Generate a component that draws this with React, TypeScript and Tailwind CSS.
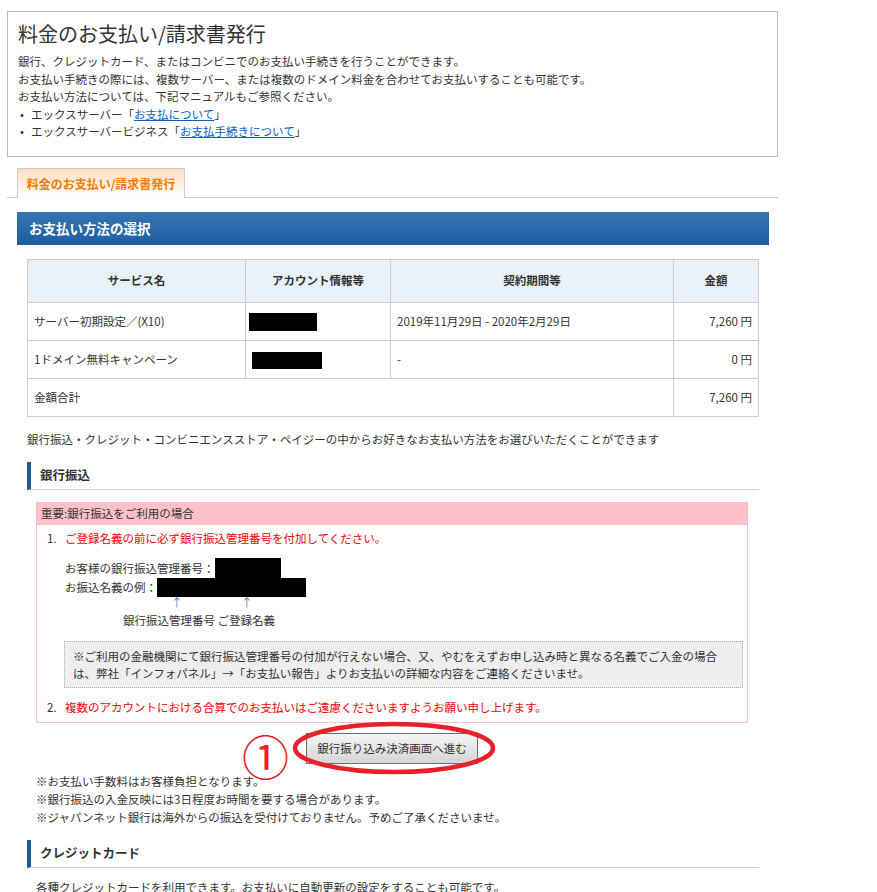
import React from "react";

const font = { fontFamily: '"Noto Sans CJK JP", "Noto Sans", sans-serif' };

function Redact({ w, h }: { w: number; h: number }) {
  return <span className="inline-block bg-black align-middle" style={{ width: w, height: h }} />;
}

function SectionHeading({ children }: { children: React.ReactNode }) {
  return (
    <div className="flex h-[28px] items-center border-b border-[#d0d0d0] border-l-[4px] border-l-[#1e5a9e] pl-[9px] text-[12.5px] font-bold text-[#333]">
      {children}
    </div>
  );
}

export default function App() {
  return (
    <div style={font} className="w-[877px] bg-white pt-[11px] pl-[7px] text-[#333]">
      {/* top box */}
      <div className="h-[146px] w-[771px] border border-[#bbb] pl-[10px] pt-[10px]">
        <h1 className="text-[20px] leading-[24px] text-[#333]">料金のお支払い/請求書発行</h1>
        <div className="mt-[7px] text-[11.5px] leading-[17.5px]">
          <p>銀行、クレジットカード、またはコンビニでのお支払い手続きを行うことができます。</p>
          <p>お支払い手続きの際には、複数サーバー、または複数のドメイン料金を合わせてお支払いすることも可能です。</p>
          <p>お支払い方法については、下記マニュアルもご参照ください。</p>
          <ul>
            <li className="flex">
              <span className="w-[13px] pl-[2px]">•</span>
              <span>
                エックスサーバー「<a className="text-[#0b5fc4] underline">お支払について</a>」
              </span>
            </li>
            <li className="flex">
              <span className="w-[13px] pl-[2px]">•</span>
              <span>
                エックスサーバービジネス「<a className="text-[#0b5fc4] underline">お支払手続きについて</a>」
              </span>
            </li>
          </ul>
        </div>
      </div>

      {/* tab strip */}
      <div className="mt-[11px] flex w-[771px] border-b border-[#ccc] pl-[10px]">
        <div className="-mb-px flex h-[30px] w-[168px] items-center justify-center border border-b-0 border-[#ccc] bg-gradient-to-b from-[#fddcc0] to-white text-[12px] font-bold text-[#f47c00]">
          料金のお支払い/請求書発行
        </div>
      </div>

      <div className="pl-[10px]">
        {/* blue header */}
        <div className="mt-[14px] flex h-[33px] w-[752px] items-center bg-gradient-to-b from-[#3876b0] to-[#1c5ea3] pl-[12px] text-[13.5px] font-bold text-white">
          お支払い方法の選択
        </div>

        <div className="pl-[10px]">
          {/* table */}
          <table className="mt-[14px] w-[731px] table-fixed border-collapse text-[11.5px]">
            <colgroup>
              <col style={{ width: 218 }} />
              <col style={{ width: 145 }} />
              <col style={{ width: 283 }} />
              <col style={{ width: 85 }} />
            </colgroup>
            <thead>
              <tr className="h-[43px] bg-[#e8f0f8]">
                <th className="border border-[#ccc] font-bold">サービス名</th>
                <th className="border border-[#ccc] font-bold">アカウント情報等</th>
                <th className="border border-[#ccc] font-bold">契約期間等</th>
                <th className="border border-[#ccc] font-bold">金額</th>
              </tr>
            </thead>
            <tbody>
              <tr className="h-[38px]">
                <td className="border border-[#ccc] pl-[6px]">サーバー初期設定／(X10)</td>
                <td className="border border-[#ccc] pl-[3px]">
                  <Redact w={68} h={18} />
                </td>
                <td className="border border-[#ccc] pl-[6px]">2019年11月29日 - 2020年2月29日</td>
                <td className="border border-[#ccc] pr-[6px] text-right">7,260 円</td>
              </tr>
              <tr className="h-[38px]">
                <td className="border border-[#ccc] pl-[6px]">1ドメイン無料キャンペーン</td>
                <td className="border border-[#ccc] pl-[6px]">
                  <Redact w={70} h={17} />
                </td>
                <td className="border border-[#ccc] pl-[6px]">-</td>
                <td className="border border-[#ccc] pr-[6px] text-right">0 円</td>
              </tr>
              <tr className="h-[38px]">
                <td colSpan={3} className="border border-[#ccc] pl-[6px]">金額合計</td>
                <td className="border border-[#ccc] pr-[6px] text-right">7,260 円</td>
              </tr>
            </tbody>
          </table>

          <p className="mt-[13px] text-[11.5px] leading-[18px]">
            銀行振込・クレジット・コンビニエンスストア・ペイジーの中からお好きなお支払い方法をお選びいただくことができます
          </p>

          {/* bank transfer */}
          <div className="mt-[14px] w-[732px]">
            <SectionHeading>銀行振込</SectionHeading>
          </div>

          <div className="ml-[9px] mt-[12px] w-[712px] border border-[#ffc0cb] text-[11.5px]">
            <div className="flex h-[22px] items-center bg-[#ffc0cb] pl-[4px]">重要:銀行振込をご利用の場合</div>
            <div className="pb-[6px] pl-[10px] pt-[4px] pr-[4px]">
              <div className="flex leading-[18px]">
                <span className="w-[18px]">1.</span>
                <span className="text-[#ff0000]">ご登録名義の前に必ず銀行振込管理番号を付加してください。</span>
              </div>
              <div className="mt-[11px] pl-[18px] leading-[19px]">
                <div className="flex items-center">
                  <span>お客様の銀行振込管理番号：</span>
                  <Redact w={66} h={20} />
                </div>
                <div className="flex items-center">
                  <span>お振込名義の例：</span>
                  <Redact w={149} h={19} />
                </div>
                <div className="relative h-[14px] text-[#5a82c0]">
                  <span className="absolute left-[106px] top-[-4px]">↑</span>
                  <span className="absolute left-[176px] top-[-4px]">↑</span>
                </div>
                <div className="pl-[58px] leading-[18px]">銀行振込管理番号 ご登録名義</div>
              </div>
              <div className="ml-[17px] mt-[12px] border border-dotted border-[#aaa] bg-[#eeeeee] px-[8px] py-[6px] leading-[16.5px]">
                ※ご利用の金融機関にて銀行振込管理番号の付加が行えない場合、又、やむをえずお申し込み時と異なる名義でご入金の場合は、弊社「インフォパネル」→「お支払い報告」よりお支払いの詳細な内容をご連絡くださいませ。
              </div>
              <div className="mt-[10px] flex leading-[18px]">
                <span className="w-[18px]">2.</span>
                <span className="text-[#ff0000]">複数のアカウントにおける合算でのお支払いはご遠慮くださいますようお願い申し上げます。</span>
              </div>
            </div>
          </div>

          {/* button row */}
          <div className="relative ml-[9px] mt-[10px] flex w-[712px] justify-center">
            <button className="h-[31px] w-[172px] border border-[#707070] bg-gradient-to-b from-[#f4f4f4] to-[#d6d6d6] text-[11.5px] text-[#333]">
              銀行振り込み決済画面へ進む
            </button>
            <svg className="pointer-events-none absolute left-[256px] top-[-12px]" width="204" height="54" viewBox="0 0 204 54">
              <ellipse cx="102" cy="27" rx="99" ry="24" fill="none" stroke="#e8202a" strokeWidth="4.5" />
            </svg>
            <span className="pointer-events-none absolute left-[206px] top-[2px] text-[47px] leading-[40px] text-[#e8202a]">①</span>
          </div>

          <div className="ml-[9px] mt-[8px] text-[11.5px] leading-[18px]">
            <p>※お支払い手数料はお客様負担となります。</p>
            <p>※銀行振込の入金反映には3日程度お時間を要する場合があります。</p>
            <p>※ジャパンネット銀行は海外からの振込を受付けておりません。予めご了承くださいませ。</p>
          </div>

          {/* credit */}
          <div className="mt-[14px] w-[732px]">
            <SectionHeading>クレジットカード</SectionHeading>
          </div>
          <p className="ml-[9px] mt-[10px] text-[11.5px] leading-[18px]">
            各種クレジットカードを利用できます。お支払いに自動更新の設定をすることも可能です。
          </p>
        </div>
      </div>
    </div>
  );
}
